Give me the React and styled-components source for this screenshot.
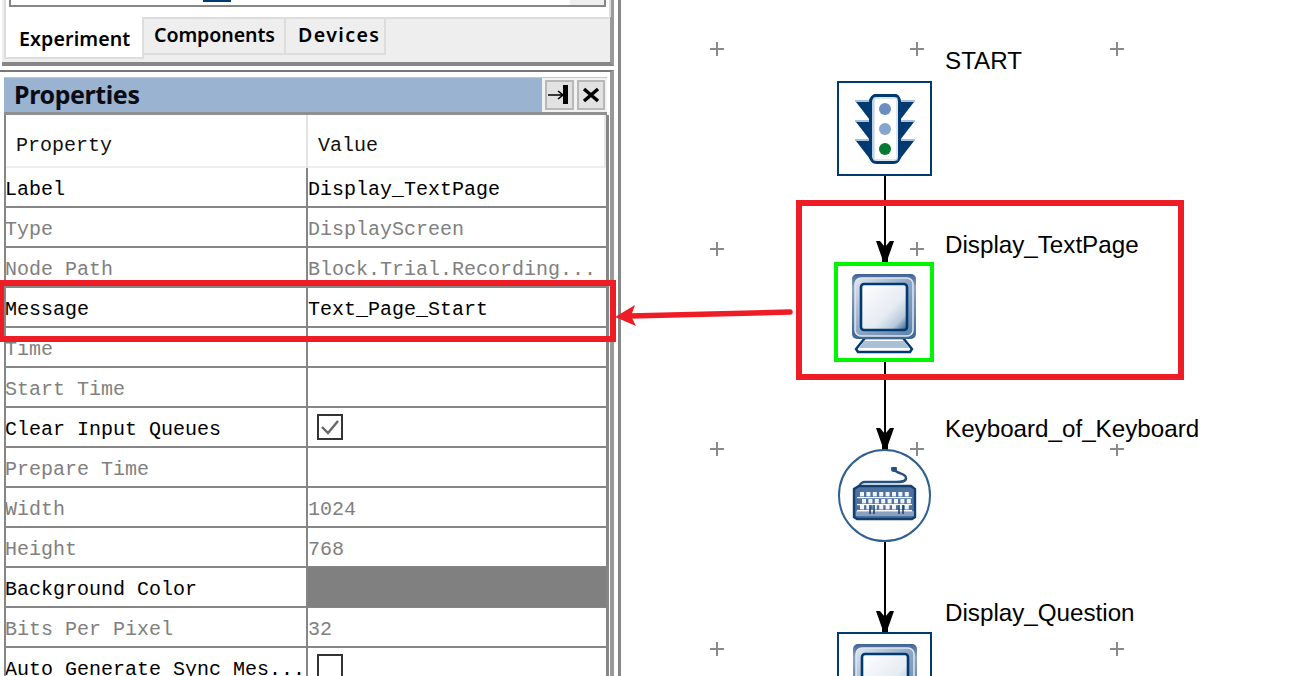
import React from 'react';
import styled, { createGlobalStyle } from 'styled-components';

const Global = createGlobalStyle`
  html, body { margin: 0; padding: 0; background: #fff; height: 676px; overflow: hidden; }
  #root { height: 676px; }
`;

const NAVY = '#003a70';
const RED = '#ee1c25';
const LINE = '#868686';

const Page = styled.div`
  position: relative;
  display: flex;
  width: 1292px;
  height: 676px;
  overflow: hidden;
  background: #fff;
`;

const Sidebar = styled.aside`
  flex: 0 0 621px;
  box-sizing: border-box;
  height: 676px;
  overflow: hidden;
  padding-right: 4px;
  background: #fff;
  border-right: 3px solid ${LINE};
  display: flex;
  flex-direction: column;
`;

const TopPane = styled.section`
  flex: 0 0 66px;
  box-sizing: border-box;
  margin-left: 2px;
  width: 612px;
  padding-left: 2px;
  background: #eee;
  border-bottom: 4px solid ${LINE};
  border-right: 4px solid #999;
  display: flex;
  flex-direction: column;
`;

const TreeWell = styled.div`
  flex: 0 0 17px;
  box-sizing: border-box;
  margin-right: -1px;
  padding: 0 3px;
  background: #fff;
  border-left: 2px solid #ddd;
  border-right: 2px solid #ddd;
`;

const TreeBox = styled.div`
  height: 7px;
  box-sizing: border-box;
  background: #fff;
  border-left: 2px solid ${LINE};
  border-right: 2px solid ${LINE};
  border-bottom: 2px solid ${LINE};
  display: flex;
`;

const TreeSelection = styled.i`
  display: block;
  width: 28px;
  height: 2px;
  margin-left: 192px;
  background: ${NAVY};
`;

const TreeThumb = styled.i`
  display: block;
  width: 34px;
  height: 5px;
  margin-left: auto;
  background: #eee;
`;

const TabBar = styled.div`
  flex: 1;
  display: flex;
  align-items: flex-start;
`;

const ActiveTab = styled.div`
  box-sizing: border-box;
  width: 140px;
  height: 42px;
  padding: 10px 0 0 13px;
  background: #fff;
  border-left: 2px solid #ddd;
  border-right: 2px solid #ddd;
  border-bottom: 2px solid #ddd;
  font: 600 19.6px/24px 'Noto Sans', sans-serif;
  color: #000;
  letter-spacing: 0.1px;
`;

const TabStrip = styled.div`
  flex: 1;
  display: flex;
  height: 38px;
  box-sizing: border-box;
  border-top: 2px solid #ddd;
  margin-right: 1px;
`;

const Tab = styled.div`
  box-sizing: border-box;
  width: ${(p) => p.$w}px;
  height: 38px;
  padding: 0 0 0 ${(p) => p.$pad}px;
  margin-top: -2px;
  border-top: 2px solid #ddd;
  border-right: 2px solid #ddd;
  border-bottom: 2px solid #ddd;
  font: 600 19.6px/32px 'Noto Sans', sans-serif;
  color: #000;
  letter-spacing: ${(p) => p.$ls}px;
`;

const Gutter = styled.div`
  flex: 0 0 4px;
  width: 610px;
`;

const PropsPane = styled.section`
  flex: 1;
  width: 614px;
  box-sizing: border-box;
  border-top: 2px solid #777;
  border-right: 4px solid #999;
  padding: 5px 3px 0 4px;
  display: flex;
  flex-direction: column;
  overflow: hidden;
`;

const TitleBar = styled.header`
  flex: 0 0 38px;
  box-sizing: border-box;
  display: flex;
  align-items: center;
  background: #9ab3d0;
  border-top: 1px solid #c6c6c6;
  border-bottom: 3px solid #909090;
  padding-left: 10px;
`;

const Title = styled.h2`
  flex: 1;
  margin: -2px 0 0;
  font: 700 25px/32px 'Noto Sans', sans-serif;
  letter-spacing: -0.4px;
  color: #0b0b14;
`;

const TitleTools = styled.div`
  align-self: stretch;
  width: 65px;
  box-sizing: border-box;
  background: #f2f2f2;
  display: flex;
  gap: 3px;
  padding: 2px 2px 2px 3px;
`;

const ToolButton = styled.button`
  flex: 1;
  padding: 0;
  margin: 0;
  background: #e2e2e2;
  border: 2px solid #b8b8b8;
  display: flex;
  align-items: center;
  justify-content: center;
`;

const Table = styled.div`
  flex: 1;
  border-left: 2px solid ${LINE};
  border-right: 3px solid ${LINE};
  margin-right: -2px;
  overflow: hidden;
`;

const HeadRow = styled.div`
  display: grid;
  grid-template-columns: 302px 1fr;
  height: 53px;
  box-sizing: border-box;
  border-bottom: 2px solid #eee;
  border-right: 2px solid #e8e8e8;
  margin-left: -2px;
  padding-left: 2px;
`;

const HeadCell = styled.div`
  font: 400 20px/62px 'Liberation Mono', 'Noto Sans CJK SC', monospace;
  padding-left: ${(p) => p.$pad}px;
  color: #111;
  ${(p) => p.$first && 'border-right: 2px solid #e4e4e4;'}
`;

const Row = styled.div`
  display: grid;
  grid-template-columns: 300px 2px 1fr;
  height: 40px;
  box-sizing: border-box;
  border-bottom: 2px solid ${LINE};
`;

const ColLine = styled.i`
  display: block;
  background: ${LINE};
`;

const Name = styled.div`
  font: 400 20px/43px 'Liberation Mono', 'Noto Sans CJK SC', monospace;
  color: ${(p) => (p.$off ? '#808080' : '#000')};
  white-space: nowrap;
  margin-left: -1px;
`;

const Value = styled.div`
  font: 400 20px/43px 'Liberation Mono', 'Noto Sans CJK SC', monospace;
  color: ${(p) => (p.$off ? '#808080' : '#000')};
  white-space: nowrap;
  overflow: hidden;
  background: ${(p) => p.$fill || 'transparent'};
  height: ${(p) => (p.$fill ? '40px' : 'auto')};
  margin-top: ${(p) => (p.$fill ? '-1px' : '0')};
`;

const Check = styled.span`
  display: block;
  box-sizing: border-box;
  width: 26px;
  height: 26px;
  margin: 6px 0 0 9px;
  background: #fff;
  border: 2px solid #333;
`;

const Canvas = styled.main`
  flex: 1;
  position: relative;
  height: 676px;
  background: #fff;
  overflow: hidden;
`;

const ORIGIN = 621;

const Plus = styled.span`
  position: absolute;
  left: ${(p) => p.$x - ORIGIN - 7}px;
  top: ${(p) => p.$y - 7}px;
  width: 14px;
  height: 14px;
  background:
    linear-gradient(#8a8a8a, #8a8a8a) center / 14px 2px no-repeat,
    linear-gradient(#8a8a8a, #8a8a8a) center / 2px 14px no-repeat;
`;

const NodeLabel = styled.span`
  position: absolute;
  left: ${945 - ORIGIN}px;
  top: ${(p) => p.$y}px;
  background: #fff;
  font: 400 24.2px/30px 'Liberation Sans', Arial, sans-serif;
  color: #000;
  white-space: nowrap;
`;

const NodeBox = styled.div`
  position: absolute;
  box-sizing: border-box;
  left: ${(p) => p.$x - ORIGIN}px;
  top: ${(p) => p.$y}px;
  width: ${(p) => p.$s}px;
  height: ${(p) => p.$s}px;
  background: #fff;
  border: ${(p) => (p.$active ? '4px solid #00f500' : `2px solid ${NAVY}`)};
  display: flex;
  justify-content: center;
  align-items: flex-start;
`;

const NodeRound = styled.div`
  position: absolute;
  box-sizing: border-box;
  left: ${838 - ORIGIN}px;
  top: 449px;
  width: 93px;
  height: 93px;
  border-radius: 50%;
  background: #fff;
  border: 2px solid #2f6090;
  display: flex;
  justify-content: center;
  align-items: center;
`;

const Edges = styled.svg`
  position: absolute;
  left: 0;
  top: 0;
  pointer-events: none;
`;

const Highlight = styled.div`
  position: absolute;
  box-sizing: border-box;
  left: ${(p) => p.$x}px;
  top: ${(p) => p.$y}px;
  width: ${(p) => p.$w}px;
  height: ${(p) => p.$h}px;
  border: 6px solid ${RED};
  ${(p) => p.$flushLeft && 'border-left-width: 4px;'}
  pointer-events: none;
`;

const Callout = styled.svg`
  position: absolute;
  left: 610px;
  top: 300px;
  pointer-events: none;
`;

const rows = [
  { n: 'Label', v: 'Display_TextPage' },
  { n: 'Type', v: 'DisplayScreen', off: true },
  { n: 'Node Path', v: 'Block.Trial.Recording...', off: true },
  { n: 'Message', v: 'Text_Page_Start' },
  { n: 'Time', v: '', off: true },
  { n: 'Start Time', v: '', off: true },
  { n: 'Clear Input Queues', check: true },
  { n: 'Prepare Time', v: '', off: true },
  { n: 'Width', v: '1024', off: true },
  { n: 'Height', v: '768', off: true },
  { n: 'Background Color', fill: '#808080' },
  { n: 'Bits Per Pixel', v: '32', off: true },
  { n: 'Auto Generate Sync Mes...', check: 'empty' },
];

const plusses = [
  [717, 49], [917, 49], [1117, 49],
  [717, 249], [917, 249],
  [717, 449], [917, 449], [1117, 449],
  [717, 649], [1117, 649],
];

const PinIcon = () => (
  <svg width="22" height="22" viewBox="0 0 22 22">
    <path d="M0 11H15M10 7l5 4-5 4" fill="none" stroke="#000" strokeWidth="1.6" />
    <rect x="15" y="1" width="5" height="19" fill="#000" />
  </svg>
);

const CloseIcon = () => (
  <svg width="18" height="18" viewBox="0 0 18 18">
    <path d="M2 3L16 15M16 3L2 15" stroke="#000" strokeWidth="3.4" fill="none" />
  </svg>
);

const TickIcon = () => (
  <svg width="22" height="22" viewBox="0 0 22 22" style={{ display: 'block' }}>
    <path d="M3 11l6 6 10-12" fill="none" stroke="#666" strokeWidth="2.4" />
  </svg>
);

const TrafficIcon = () => (
  <svg width="64" height="74" viewBox="852 91 64 74" style={{ marginTop: 9 }}>
    <defs>
      <linearGradient id="tl" x1="0" y1="0" x2="1" y2="0">
        <stop offset="0" stopColor="#a9c0dc" />
        <stop offset="0.3" stopColor="#fff" />
        <stop offset="1" stopColor="#fff" />
      </linearGradient>
    </defs>
    {[100, 120, 139].map((y) => (
      <g key={y}>
        <path d={`M855 ${y + 1}H872V${y + 23}Z`} fill={NAVY} />
        <path d={`M913 ${y + 1}H896V${y + 23}Z`} fill={NAVY} />
        <path d={`M854 ${y}H870M914 ${y}H898`} stroke="#a9c0dc" strokeWidth="2" />
      </g>
    ))}
    <rect x="870" y="93" width="29" height="10" rx="5" fill={NAVY} />
    <rect x="869.5" y="94.5" width="29" height="67" rx="6" fill="url(#tl)" stroke={NAVY} strokeWidth="3" />
    <rect x="873" y="97" width="23" height="62" fill="#fff" stroke="#b9cbe0" strokeWidth="1" />
    <circle cx="884" cy="108" r="6" fill="#6c8dbf" />
    <circle cx="884" cy="128" r="6" fill="#86a5ca" />
    <circle cx="884" cy="148" r="6" fill="#067a30" />
  </svg>
);

const MonitorIcon = ({ id, top }) => (
  <svg width="66" height="82" viewBox="851 272 66 82" style={{ marginTop: top }}>
    <defs>
      <linearGradient id={`${id}s`} x1="0" y1="0" x2="1" y2="1">
        <stop offset="0" stopColor="#fff" />
        <stop offset="0.6" stopColor="#e6ecf3" />
        <stop offset="0.82" stopColor="#b8c9dc" />
        <stop offset="1" stopColor="#2c5686" />
      </linearGradient>
      <linearGradient id={`${id}b`} x1="0" y1="0" x2="1" y2="1">
        <stop offset="0" stopColor="#dfe6ef" />
        <stop offset="0.5" stopColor="#8fa7c4" />
        <stop offset="1" stopColor="#5f82aa" />
      </linearGradient>
      <linearGradient id={`${id}f`} x1="0" y1="0" x2="0" y2="1">
        <stop offset="0" stopColor="#3f6195" />
        <stop offset="0.2" stopColor="#8ea2bf" />
        <stop offset="1" stopColor="#3e6795" />
      </linearGradient>
    </defs>
    <path d="M865 338h38l9 11-2 3h-52l-2-3z" fill="#fff" stroke={NAVY} strokeWidth="2.4" />
    <path d="M864 341h40l5 7h-50z" fill="#aac0d6" />
    <rect x="852" y="274" width="64" height="65" rx="5" fill={`url(#${id}f)`} />
    <rect x="855" y="278" width="58" height="58" rx="6" fill={`url(#${id}b)`} stroke="#dfe8f1" strokeWidth="1.5" />
    <rect x="861" y="284" width="46" height="46" rx="3" fill={`url(#${id}s)`} stroke={NAVY} strokeWidth="2.6" />
  </svg>
);

const KeyboardIcon = () => (
  <svg width="66" height="54" viewBox="851 465 66 54" style={{ marginTop: -3 }}>
    <path d="M893 467c2 5 12 4 12 9 0 4-5 4-10 4H864c-4 0-5 2-6 5" fill="none" stroke="#25507f" strokeWidth="2.4" />
    <circle cx="893" cy="467" r="3" fill="#25507f" />
    <path d="M858 484h52l4 3v28l-3 2h-55l-3-2v-28z" fill="#4f739f" stroke="#123f72" strokeWidth="2.4" />
    <rect x="855" y="509" width="58" height="5" fill="#8aa2bf" />
    {[490, 497, 503].map((y, r) => (
      <g key={y}>
        {Array.from({ length: 8 }).map((_, i) => (
          <rect key={i} x={859 + i * 6.4 + (r % 2) * 2} y={y} width="4" height="4.4" fill="#f2f6fa" />
        ))}
      </g>
    ))}
    <rect x="856" y="495" width="55" height="1.2" fill="#fff" />
    <rect x="856" y="502" width="55" height="1.2" fill="#fff" />
    <rect x="856" y="508" width="55" height="1.4" fill="#fff" />
    <path d="M869 503v9M873 503v9M898 503v9M902 503v9" stroke="#123f72" strokeWidth="1.5" />
  </svg>
);

const Edge = ({ y1, y2 }) => (
  <g>
    <path d={`M${885 - ORIGIN} ${y1}V${y2}`} stroke="#000" strokeWidth="2" />
    <path d={`M${876 - ORIGIN} ${y2 - 22}h4l5 6 5-6h4l-6 17v5h-6v-5z`} fill="#000" />
  </g>
);

export default function App() {
  return (
    <Page>
      <Global />
      <Sidebar>
        <TopPane>
          <TreeWell>
            <TreeBox>
              <TreeSelection />
              <TreeThumb />
            </TreeBox>
          </TreeWell>
          <TabBar>
            <ActiveTab>Experiment</ActiveTab>
            <TabStrip>
              <Tab $w={142} $pad={10} $ls={-0.1}>Components</Tab>
              <Tab $w={100} $pad={12} $ls={1.4}>Devices</Tab>
            </TabStrip>
          </TabBar>
        </TopPane>
        <Gutter />
        <PropsPane>
          <TitleBar>
            <Title>Properties</Title>
            <TitleTools>
              <ToolButton aria-label="Pin"><PinIcon /></ToolButton>
              <ToolButton aria-label="Close"><CloseIcon /></ToolButton>
            </TitleTools>
          </TitleBar>
          <Table>
            <HeadRow>
              <HeadCell $first $pad={10}>Property</HeadCell>
              <HeadCell $pad={10}>Value</HeadCell>
            </HeadRow>
            {rows.map((r) => (
              <Row key={r.n}>
                <Name $off={r.off}>{r.n}</Name>
                <ColLine />
                <Value $off={r.off} $fill={r.fill}>
                  {r.check ? (
                    <Check>{r.check === true && <TickIcon />}</Check>
                  ) : (
                    r.v
                  )}
                </Value>
              </Row>
            ))}
          </Table>
        </PropsPane>
      </Sidebar>
      <Canvas>
        {plusses.map(([x, y]) => (
          <Plus key={`${x}-${y}`} $x={x} $y={y} />
        ))}
        <Edges width="671" height="676">
          <Edge y1={176} y2={263} />
          <Edge y1={362} y2={450} />
          <Edge y1={542} y2={633} />
        </Edges>
        <NodeLabel $y={46}>START</NodeLabel>
        <NodeBox $x={837} $y={81} $s={95}><TrafficIcon /></NodeBox>
        <NodeLabel $y={230}>Display_TextPage</NodeLabel>
        <NodeBox $x={834} $y={262} $s={100} $active><MonitorIcon id="m1" top={6} /></NodeBox>
        <NodeLabel $y={414}>Keyboard_of_Keyboard</NodeLabel>
        <NodeRound><KeyboardIcon /></NodeRound>
        <NodeLabel $y={598}>Display_Question</NodeLabel>
        <NodeBox $x={837} $y={632} $s={95}><MonitorIcon id="m2" top={8} /></NodeBox>
      </Canvas>
      <Highlight $x={0} $y={280} $w={616} $h={62} $flushLeft />
      <Highlight $x={796} $y={200} $w={388} $h={180} />
      <Callout width="190" height="34" viewBox="610 300 190 34">
        <path d="M790 312L630 316" stroke={RED} strokeWidth="5.5" strokeLinecap="round" />
        <path d="M615 317L635 305L631 316L636 326Z" fill={RED} />
      </Callout>
    </Page>
  );
}
